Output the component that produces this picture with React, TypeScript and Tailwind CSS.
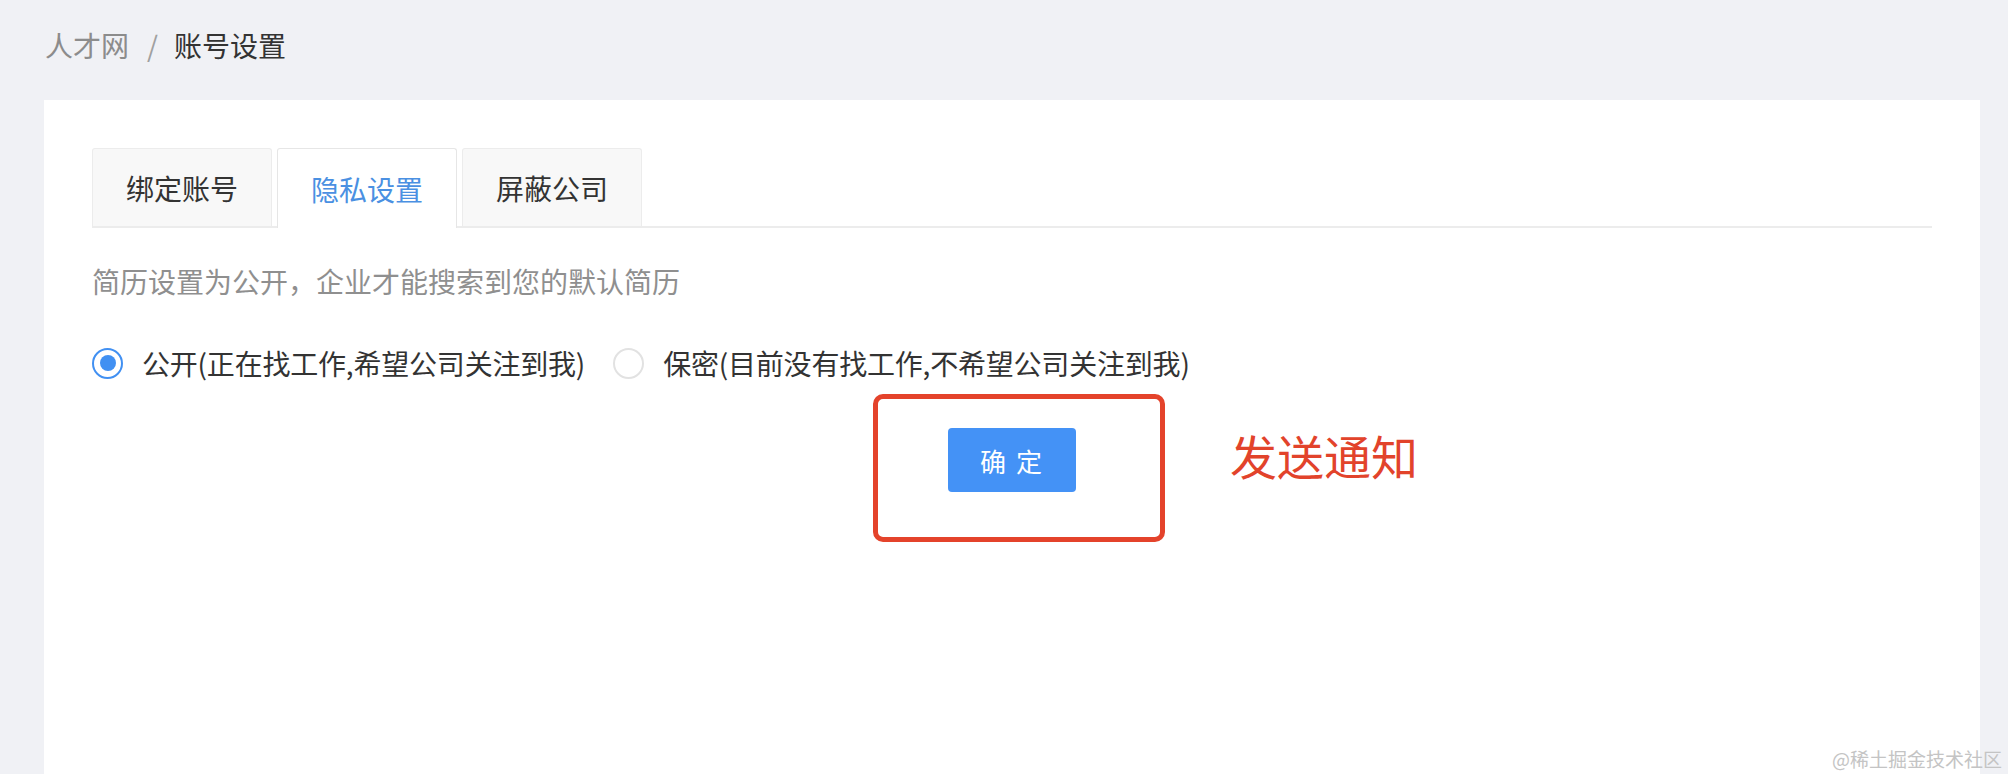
import { useState } from "react";

const tabs = ["绑定账号", "隐私设置", "屏蔽公司"];

const options = [
  { key: "public", label: "公开(正在找工作,希望公司关注到我)" },
  { key: "secret", label: "保密(目前没有找工作,不希望公司关注到我)" },
];

function Radio({ checked }: { checked: boolean }) {
  return (
    <span
      className={
        checked
          ? "w-[31px] h-[31px] rounded-full border-2 border-[#4190f2] flex items-center justify-center shrink-0"
          : "w-[31px] h-[31px] rounded-full border-2 border-[#e2e2e2] flex items-center justify-center shrink-0"
      }
    >
      {checked && <span className="w-[16px] h-[16px] rounded-full bg-[#4190f2]" />}
    </span>
  );
}

function App() {
  const [active, setActive] = useState(1);
  const [privacy, setPrivacy] = useState("public");

  return (
    <div
      className="h-[774px] overflow-hidden bg-[#f0f1f5] flex flex-col relative"
      style={{ fontFamily: '"Noto Sans CJK SC", "Noto Sans", sans-serif' }}
    >
      <div className="h-[100px] pt-[25px] pl-[45px] text-[28px] leading-[40px] flex">
        <span className="text-[#8c8c8c]">人才网</span>
        <span className="text-[#a0a0a0] ml-[18px] mr-[16px]">/</span>
        <span className="text-[#333]">账号设置</span>
      </div>

      <div className="ml-[44px] w-[1936px] flex-1 bg-white px-[48px] pt-[48px]">
        <div className="flex gap-[5px] border-b-2 border-[#ececec]">
          {tabs.map((t, i) => (
            <button
              key={t}
              onClick={() => setActive(i)}
              className={
                i === active
                  ? "h-[80px] -mb-[2px] px-[33px] text-[28px] text-[#4a90e2] bg-white border border-b-0 border-[#e6e6e6] rounded-t-[3px] flex items-center"
                  : "h-[78px] px-[33px] text-[28px] text-[#333] bg-[#f8f8f8] border border-b-0 border-[#ececec] rounded-t-[3px] flex items-center"
              }
            >
              {t}
            </button>
          ))}
        </div>

        <p className="mt-[33px] text-[28px] leading-[40px] text-[#8f8f8f]">
          简历设置为公开，企业才能搜索到您的默认简历
        </p>

        <div className="mt-[42px] flex items-center h-[40px]">
          {options.map((o, i) => (
            <label
              key={o.key}
              onClick={() => setPrivacy(o.key)}
              className={i === 0 ? "flex items-center cursor-pointer" : "flex items-center cursor-pointer ml-[28px]"}
            >
              <Radio checked={privacy === o.key} />
              <span className="ml-[19px] text-[28px] leading-[40px] text-[#333] tracking-[-0.2px]">{o.label}</span>
            </label>
          ))}
        </div>

        <div className="mt-[45px] flex justify-center">
          <div className="relative">
            <button className="w-[128px] h-[64px] rounded-[4px] bg-[#4492f6] text-white text-[26px] tracking-[2px]">
              确 定
            </button>
            {/* annotation */}
            <div className="absolute left-[-75px] top-[-34px] w-[292px] h-[148px] border-[5px] border-[#e4432b] rounded-[10px] pointer-events-none" />
            <div className="absolute left-[282px] top-[3px] text-[47px] leading-[48px] text-[#e2432b] whitespace-nowrap">
              发送通知
            </div>
          </div>
        </div>
      </div>

      <div className="absolute right-[6px] bottom-[4px] text-[19px] leading-[22px] text-[#c4c4c4]">
        @稀土掘金技术社区
      </div>
    </div>
  );
}

export default App;
